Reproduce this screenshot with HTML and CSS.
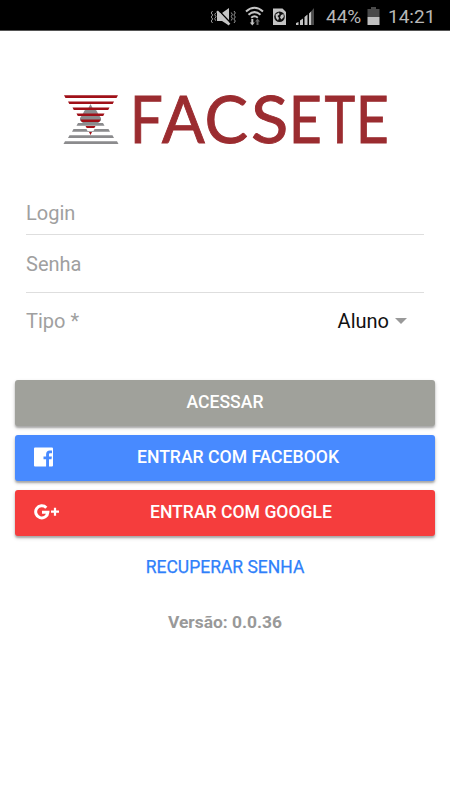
FILE: index.html
```html
<!DOCTYPE html>
<html lang="pt-BR">
<head>
<meta charset="utf-8">
<title>FACSETE</title>
<link rel="stylesheet" href="styles.css">
</head>
<body>
<header class="status">
  <svg class="status-icons" width="104" height="30" viewBox="0 0 104 30">
    <g fill="none" stroke="#999" stroke-width="1">
      <path d="M2.500 10l-1.300 2 1.500 2-1.500 2 1.500 2-1.500 2 1.300 2M5.700 12l-1 1.700 1.300 2-1.300 2 1 2M21.300 11.500l1 2-1 2 1 2-1 2M24 10l1.300 2-1.500 2 1.500 2-1.500 2 1.500 2-1.300 2"/>
    </g>
    <path fill="#c4c4c4" d="M7 12h5l7-5v17.500l-7-4.500H7z"/>
    <path stroke="#000" stroke-width="1.500" d="M8.500 9.300l12 12.500"/>
    <path stroke="#c4c4c4" stroke-width="2.400" d="M7 10.200l12.500 13.300"/>
    <g fill="none" stroke="#c4c4c4" stroke-width="2">
      <path d="M36 10.500q8.500-7.500 17 0M38.500 13.700q6-5.200 12 0M41.200 16.700q3.300-2.800 6.600 0"/>
    </g>
    <path fill="#c4c4c4" d="M41.300 18h2v3.500h1.500L42.300 24.500l-2.500-3h1.500z"/>
    <path fill="#666" d="M46.500 24h2v-3.500H50l-2.500-3-2.500 3h1.500z"/>
    <path fill="#c4c4c4" d="M63 7.500h9.500l3.500 3.500v13H63z"/>
    <circle cx="69.500" cy="15.800" r="5.300" fill="#111"/>
    <path fill="#c4c4c4" d="M65.500 13.500l3.500-2 .5 2-2 1.500 1.500 2-1 2.500-2-2.500zM71 14l2.500-1 .3 3-2.300 2.500-1.500-2z"/>
    <g fill="#c4c4c4">
      <path d="M86 22l2.500-1v3H86zM90 19.500l3-2v6.500h-3zM94.500 16l3-2.500V24h-3zM99 12.500l2.500-2.500v14H99z"/>
    </g>
    <path fill="#4b4b4b" d="M101.500 10l2.500-3v17h-2.500z"/>
  </svg>
  <span class="percent">44%</span>
  <svg class="battery" width="13" height="20" viewBox="0 0 13 20">
    <path fill="#4a4a4a" d="M4 1h5v2h3.500v8H.5V3H4z"/><path fill="#c0c0c0" d="M.5 11h12v8H.5z"/>
  </svg>
  <span class="clock">14:21</span>
</header>
<main class="page">
  <svg class="logo" width="340" height="90" viewBox="0 -10 340 90" role="img">
    <path fill="#8b8b8d" d="M35.500 19l2.300 4.500 3.700 2 2 4 2.500 3.500v2.500L43 38H28l-3-2.500V33l2.500-3.500 2-4 3.700-2z"/>
    <g fill="#a01018">
      <path d="M9 10.200h54l-1.500 2.800H10.500zM13 16.500h46l-1.300 2.500H14.300zM17.500 22.500h37l-1.300 2.500H18.800zM21.500 28.500h28l-1.300 2.500H22.800zM25.500 34.500h20l-1.300 2.500H26.800zM30.500 41h10l-1.200 2h-7.600zM34 47h3l-1.500 3z"/>
    </g>
    <g fill="#8b8b8d">
      <path d="M23 38h25l1.500 2.700h-28zM18.500 44h13l1 2h6l1-2h14l1.500 2.700H17zM14.500 50.200h43l1.500 2.700H13zM10 56.200h52l1.500 2.700H8.500z"/>
    </g>
    <g class="wordmark">
      <text transform="translate(74.700 58) scale(.9 1)">F</text>
      <text transform="translate(106.700 58) scale(.98 1)">A</text>
      <text transform="translate(149.500 58) scale(1 1)">C</text>
      <text transform="translate(196 58) scale(1.060 1)">S</text>
      <text transform="translate(233.700 58) scale(.880 1)">E</text>
      <text transform="translate(269.500 58) scale(.8 1)">T</text>
      <text transform="translate(300.700 58) scale(.880 1)">E</text>
    </g>
  </svg>
  <form class="fields">
    <div class="field login"><span>Login</span></div>
    <div class="field senha"><span>Senha</span></div>
    <div class="field tipo"><span>Tipo *</span><span class="value">Aluno</span><i class="caret"></i></div>
  </form>
  <div class="actions">
    <button class="btn grey"><span>ACESSAR</span></button>
    <button class="btn blue">
      <svg class="icon" width="20" height="20" viewBox="0 0 20 20"><path fill="#fff" d="M1 .5h17a1 1 0 0 1 1 1v17a1 1 0 0 1-1 1h-3v-7.200h2.500l.4-2.900H15V7.600c0-.9.300-1.400 1.500-1.400H18V3.600c-.3 0-1.200-.1-2.200-.1-2.300 0-3.700 1.300-3.700 3.800v2.100H9.500v2.900h2.600v7.200H1a1 1 0 0 1-1-1v-17a1 1 0 0 1 1-1z"/></svg>
      <span>ENTRAR COM FACEBOOK</span>
    </button>
    <button class="btn red">
      <svg class="icon" width="26" height="20" viewBox="0 0 26 20"><path fill="none" stroke="#fff" stroke-width="3" d="M12.300 5.700A6.100 6.100 0 1 0 13.900 10.200H8"/><path stroke="#fff" stroke-width="2.200" d="M17 9.700h8M21 5.700v8"/></svg>
      <span>ENTRAR COM GOOGLE</span>
    </button>
  </div>
  <a class="recover">RECUPERAR SENHA</a>
  <p class="version">Versão: 0.0.36</p>
</main>
</body>
</html>
```
FILE: styles.css
```css
* { box-sizing: border-box; }
body { margin: 0; background: #fff; font-family: Roboto, "Liberation Sans", sans-serif; }
.status { height: 31px; background: #000; border-bottom: 1px solid #555; display: flex; align-items: center; justify-content: flex-end; padding: 3px 15px 0 0; color: #b8b8b8; font-size: 19px; }
.status-icons { flex: none; margin: -2px 12px 0 0; }
.percent { width: 36px; }
.battery { margin: -1px 8px 0 5px; }
.clock { width: 47px; }
.page { display: flex; flex-direction: column; height: 769px; }
.logo { display: block; flex: none; margin: 44px 0 0 55px; }
.wordmark { font: 65px Lato, sans-serif; fill: #9b2c30; stroke: #9b2c30; stroke-width: .9px; }
.fields { margin: 26px 26px 0; color: #a0a0a0; font-size: 20px; }
.field { display: flex; align-items: center; border-bottom: 1px solid #dedede; }
.login { height: 44px; }
.senha { height: 58px; }
.tipo { height: 57px; border: 0; padding-bottom: 2px; }
.value { margin-left: auto; color: #111; }
.caret { width: 0; height: 0; margin: 0 17px 0 6px; border: 6px solid transparent; border-top-color: #999; border-bottom: 0; }
.actions { display: flex; flex-direction: column; gap: 9px; margin: 30px 15px 0; }
.btn { position: relative; height: 46px; border: 0; border-radius: 3px; padding: 0 0 2px; display: flex; align-items: center; justify-content: center; color: #fff; font: 500 17.6px Roboto, sans-serif; box-shadow: 0 2px 2px rgba(0,0,0,.25), 0 2px 4px rgba(0,0,0,.16); }
.grey { background: #a0a19b; }
.blue { background: #488aff; padding-left: 26px; }
.red { background: #f53d3d; padding-left: 32px; }
.icon { position: absolute; left: 19px; top: 12px; }
.recover { margin-top: 20px; align-self: center; color: #2f80fa; font-size: 17.5px; line-height: 22px; -webkit-text-stroke: .25px #2f80fa; }
.version { margin: 34px 0 0; text-align: center; color: #999; font-size: 17.400px; line-height: 20px; font-weight: 700; }
```
